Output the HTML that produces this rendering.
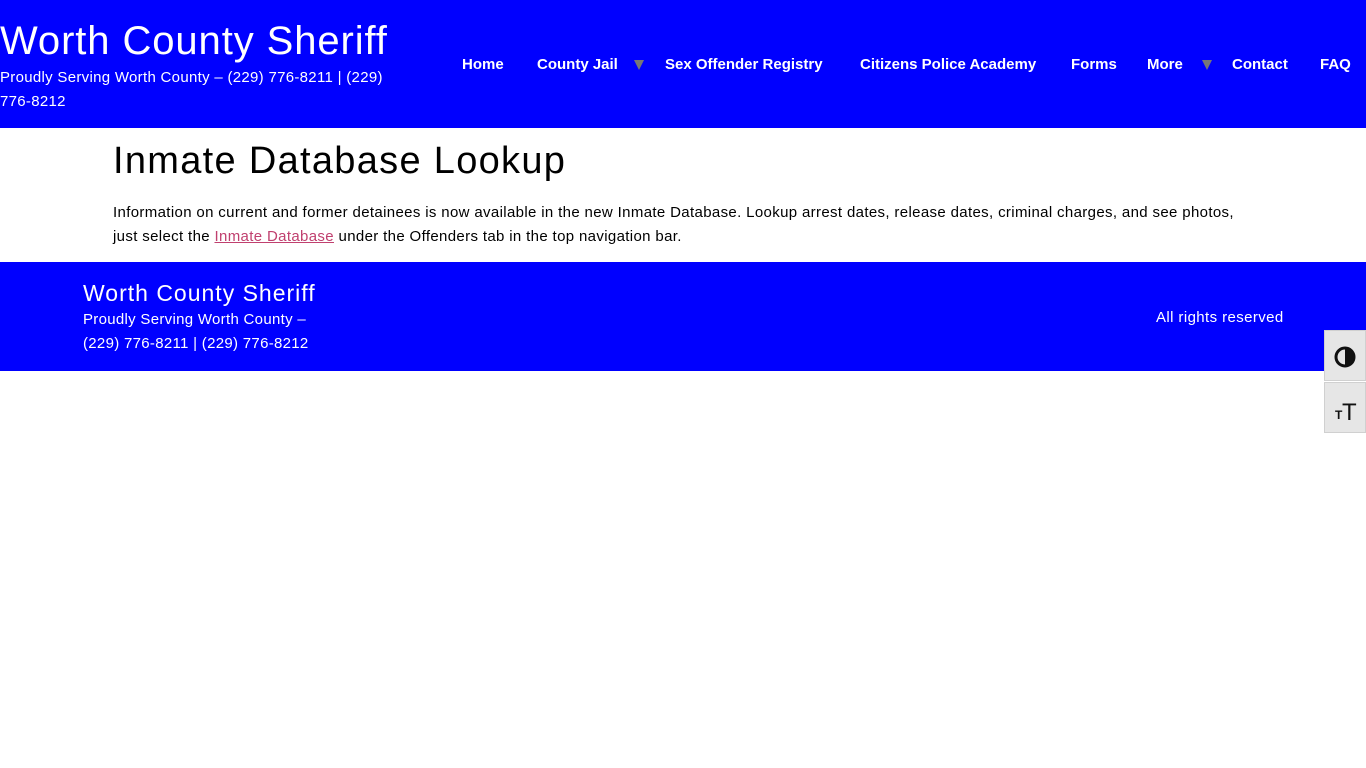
<!DOCTYPE html>
<html><head><meta charset="utf-8"><style>
*{margin:0;padding:0;box-sizing:border-box}
body{width:1366px;height:768px;background:#fff;font-family:"Liberation Sans",sans-serif;position:relative;overflow:hidden;color:#000}
.hdr{position:absolute;left:0;top:0;width:1366px;height:128px;background:#0000ff;color:#fff}
.t{position:absolute;left:0;top:19px;font-size:40px;white-space:nowrap;letter-spacing:0.9px}
.s{position:absolute;left:0;top:66px;width:400px;font-size:15px;line-height:24px;letter-spacing:0.3px}
.nav a{position:absolute;top:56px;font-size:15px;font-weight:bold;color:#fff;white-space:nowrap;text-decoration:none}
.tri{position:absolute;top:60px;width:0;height:0;border-left:5px solid transparent;border-right:5px solid transparent;border-top:10px solid #777}
h1{position:absolute;left:113px;top:140px;font-size:38px;font-weight:normal;letter-spacing:1.3px}
.p{position:absolute;left:113px;top:201px;width:1135px;font-size:15px;line-height:24px;letter-spacing:0.35px}
.p a{color:#c0406f}
.ft{position:absolute;left:0;top:262px;width:1366px;height:109px;background:#0000ff;color:#fff}
.ft .n{position:absolute;left:83px;top:18px;font-size:23px;letter-spacing:1px}
.ft .d{position:absolute;left:83px;top:46px;font-size:15px;line-height:24px;letter-spacing:0.3px}
.ft .r{position:absolute;left:1156px;top:47px;font-size:15px;letter-spacing:0.4px}
.acc{position:absolute;left:1324px;width:42px;height:51px;background:#e6e6e6;border:1px solid #d0d0d0}
</style></head><body>
<div class="hdr">
<div class="t">Worth County Sheriff</div>
<div class="s">Proudly Serving Worth County – (229) 776-8211 | (229) 776-8212</div>
<div class="nav">
<a style="left:462px">Home</a>
<a style="left:537px">County Jail</a><span class="tri" style="left:634px"></span>
<a style="left:665px">Sex Offender Registry</a>
<a style="left:860px">Citizens Police Academy</a>
<a style="left:1071px">Forms</a>
<a style="left:1147px">More</a><span class="tri" style="left:1202px"></span>
<a style="left:1232px">Contact</a>
<a style="left:1320px">FAQ</a>
</div></div>
<h1>Inmate Database Lookup</h1>
<div class="p">Information on current and former detainees is now available in the new Inmate Database. Lookup arrest dates, release dates, criminal charges, and see photos, just select the <a href="#">Inmate Database</a> under the Offenders tab in the top navigation bar.</div>
<div class="ft">
<div class="n">Worth County Sheriff</div>
<div class="d">Proudly Serving Worth County –<br>(229) 776-8211 | (229) 776-8212</div>
<div class="r">All rights reserved</div>
</div>
<div class="acc" style="top:330px"><svg width="42" height="51" viewBox="0 0 42 51"><circle cx="20" cy="26" r="9" fill="none" stroke="#111" stroke-width="3"/><path d="M20 17a9 9 0 0 1 0 18z" fill="#111"/></svg></div>
<div class="acc" style="top:382px"><svg width="42" height="51" viewBox="0 0 42 51"><text x="10" y="36" font-size="12" font-family="Liberation Sans" font-weight="bold" fill="#111">T</text><text x="17" y="37" font-size="24" font-family="Liberation Sans" fill="#111">T</text></svg></div>
</body></html>
